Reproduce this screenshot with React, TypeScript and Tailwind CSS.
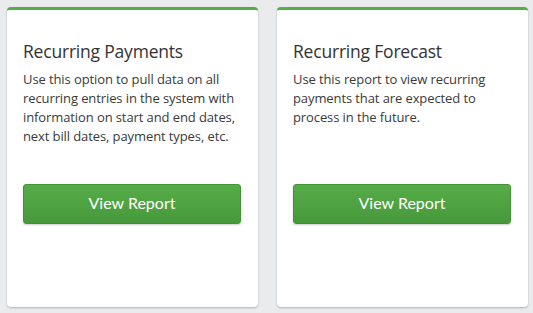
import React from "react";

const cards = [
  {
    title: "Recurring Payments",
    text: "Use this option to pull data on all recurring entries in the system with information on start and end dates, next bill dates, payment types, etc.",
  },
  {
    title: "Recurring Forecast",
    text: "Use this report to view recurring payments that are expected to process in the future.",
  },
];

export default function App() {
  return (
    <div className="w-[533px] h-[313px] bg-[#e9ebed] pl-[7px] pt-[7px] flex gap-[19px]">
      {cards.map((c) => (
        <div
          key={c.title}
          className="w-[251px] h-[300px] bg-white rounded-[4px] border-t-[3px] border-[#56ac47] shadow-[0_1px_2px_rgba(0,0,0,0.25)] px-4 pt-[30px] flex flex-col"
        >
          <h2 className="text-[17.5px] leading-[22px] text-[#333] font-['Open_Sans',sans-serif] tracking-[-0.2px]">
            {c.title}
          </h2>
          <p className="mt-[8px] h-[104px] text-[13px] leading-[19px] text-[#3a3a3a] font-['Open_Sans',sans-serif] tracking-[-0.1px]">
            {c.text}
          </p>
          <button className="mt-[10px] h-[40px] w-[218px] rounded-[3px] bg-gradient-to-b from-[#56ac48] to-[#47993b] border border-[#449238] text-white text-[16px] leading-[20px] pb-[2px] font-['Lato',sans-serif] shadow-[0_1px_2px_rgba(0,0,0,0.2)]">
            View Report
          </button>
        </div>
      ))}
    </div>
  );
}
